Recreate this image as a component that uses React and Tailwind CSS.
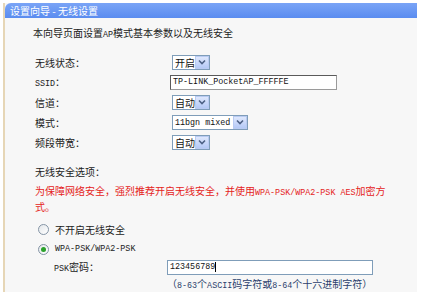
import React from 'react';

const cjk = "font-['Noto_Sans_CJK_SC',sans-serif]";
const Lat = ({ children }) => (
  <span className="font-['Liberation_Mono','Noto_Sans_CJK_SC',monospace] text-[8.4px]">{children}</span>
);

const Select = ({ width, children }) => (
  <div className={`flex items-center h-[15px] border border-[#7f9db9] bg-white ${width}`}>
    <span className="flex-1 pl-[2px] leading-[13px] text-[#111] whitespace-nowrap">{children}</span>
    <span className="flex items-center justify-center shrink-0 w-[14px] h-[13px] border border-[#b9cbf2] bg-gradient-to-b from-[#dfe8fd] to-[#b5c9f6]">
      <svg width="8" height="6" viewBox="0 0 8 6">
        <path d="M1 1.5 L4 4.5 L7 1.5" fill="none" stroke="#4d6185" strokeWidth="1.6" />
      </svg>
    </span>
  </div>
);

const Row = ({ label, children }) => (
  <div className="flex items-center h-[20px] ml-[30px]">
    <div className="w-[137px] text-[#222]">{label}</div>
    {children}
  </div>
);

const Radio = ({ checked }) => (
  <span className="flex items-center justify-center w-[11px] h-[11px] rounded-full border border-[#8595a6] bg-gradient-to-br from-[#e4e7ea] to-white">
    {checked && <span className="w-[5px] h-[5px] rounded-full bg-[#2aa12a]" />}
  </span>
);

export default function App() {
  return (
    <div className={`w-[422px] h-[292px] bg-white pt-[3px] pl-[3px] pr-[5px] overflow-hidden text-[10px] ${cjk}`}>
      <div className="h-full flex flex-col bg-[#f7f7f7] border-l-2 border-[#e6d6b6]">
        <div className="h-[17px] flex items-center pl-[5px] rounded-tl-[6px] bg-gradient-to-b from-[#7aa4f6] to-[#5a8cf0] text-white">
          设置向导 - 无线设置
        </div>

        <div className="ml-[28px] mt-[8px] leading-[14px] text-[#222]">
          本向导页面设置<Lat>AP</Lat>模式基本参数以及无线安全
        </div>

        <div className="mt-[10px]">
          <Row label="无线状态：">
            <Select width="w-[38px]">开启</Select>
          </Row>
          <Row label={<><Lat>SSID</Lat>：</>}>
            <div className="-ml-[2px] w-[167px] h-[15px] flex items-center pl-[2px] bg-white border border-[#5a5a5a] border-r-[#9a9a9a] border-b-[#9a9a9a] text-[#111]">
              <Lat>TP-LINK_PocketAP_FFFFFE</Lat>
            </div>
          </Row>
          <Row label="信道：">
            <Select width="w-[38px]">自动</Select>
          </Row>
          <Row label="模式：">
            <Select width="w-[76px]"><Lat>11bgn mixed</Lat></Select>
          </Row>
          <Row label="频段带宽：">
            <Select width="w-[38px]">自动</Select>
          </Row>
        </div>

        <div className="ml-[30px] mt-[13px] leading-[14px] text-[#222]">无线安全选项：</div>
        <div className="ml-[30px] mt-[5px] leading-[14px] text-[#e5231b]">
          <div>为保障网络安全，强烈推荐开启无线安全，并使用<Lat>WPA-PSK/WPA2-PSK AES</Lat>加密方</div>
          <div>式。</div>
        </div>

        <div className="mt-[5px] ml-[33px]">
          <div className="flex items-center h-[20px] gap-[6px] text-[#222]">
            <Radio />
            <span>不开启无线安全</span>
          </div>
          <div className="flex items-center h-[20px] gap-[6px] text-[#222]">
            <Radio checked />
            <Lat>WPA-PSK/WPA2-PSK</Lat>
          </div>
        </div>

        <div className="flex items-center h-[16px] ml-[49px] text-[#222]">
          <div className="w-[113px]"><Lat>PSK</Lat>密码：</div>
          <div className="w-[206px] h-[15px] flex items-center pl-[2px] bg-white border border-[#7f9db9] text-[#111]">
            <Lat>123456789</Lat>
            <span className="w-px h-[10px] bg-black" />
          </div>
        </div>

        <div className="ml-[162px] mt-[2px] leading-[14px] text-[#2b3f6c]">
          （<Lat>8-63</Lat>个<Lat>ASCII</Lat>码字符或<Lat>8-64</Lat>个十六进制字符）
        </div>
      </div>
    </div>
  );
}
